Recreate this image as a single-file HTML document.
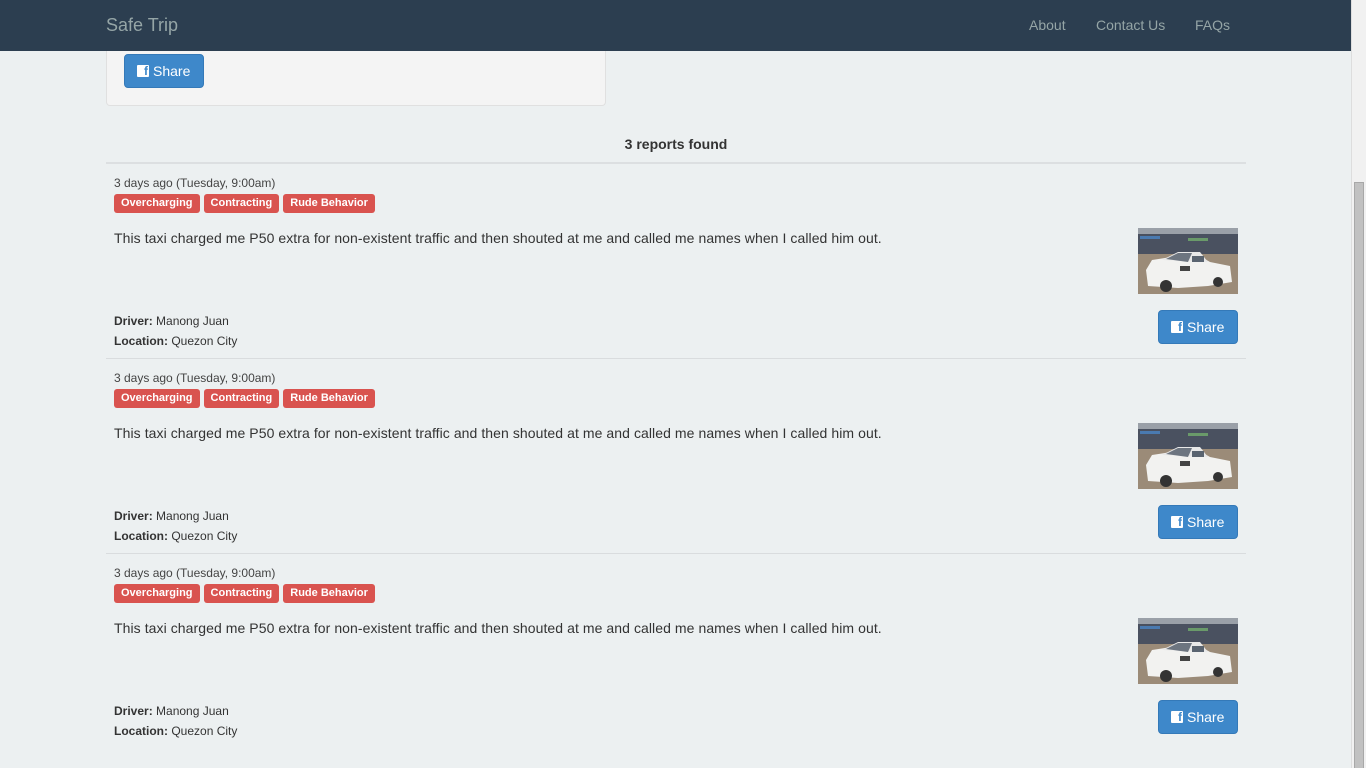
<!DOCTYPE html>
<html><head><meta charset="utf-8"><style>
*{box-sizing:border-box;margin:0;padding:0}
body{width:1366px;height:768px;overflow:hidden;background:#ecf0f1;font-family:"Liberation Sans",Arial,sans-serif;color:#2c3e50;position:relative}
.nav{position:absolute;left:0;top:0;width:1351px;height:51px;background:#2c3e50;z-index:5}
.brand{position:absolute;left:106px;top:15px;font-size:18px;color:#95a5a6}
.nl{position:absolute;top:17px;font-size:14px;color:#95a5a6}
.sb{position:absolute;left:1351px;top:0;width:15px;height:768px;background:#f1f1f1;border-left:1px solid #ddd}
.thumb{position:absolute;left:1354px;top:182px;width:10px;height:586px;background:#c1c1c1;border:1px solid #a8a8a8;border-bottom:none}
.panel{position:absolute;left:106px;top:30px;width:500px;height:76px;background:#f4f4f4;border:1px solid #e0e0e0;border-top:none;border-radius:0 0 4px 4px}
.btn{position:absolute;width:80px;height:34px;background:#3e88ca;border:1px solid #3479b8;border-radius:4px;color:#fff;font-size:14px;line-height:32px;text-align:left;padding-left:12px}
.fb{display:inline-block;width:12px;height:12px;background:#fff;border-radius:1px;position:relative;vertical-align:-1px;margin-right:4px}
.fb:after{content:"f";position:absolute;right:1px;top:-1px;font-size:12px;font-weight:bold;color:#3e88ca;line-height:14px}
.found{position:absolute;left:106px;width:1140px;top:136px;text-align:center;font-weight:bold;font-size:14px;color:#333}
.hr{position:absolute;left:106px;width:1140px;height:2px;background:#dcdfe1}
.hr1{height:1px;background:#d9dcde}
.rep{position:absolute;left:106px;width:1140px;height:195px}
.date{position:absolute;left:8px;top:0;font-size:12px;color:#444}
.tags{position:absolute;left:8px;top:18px;font-size:0}
.tag{display:inline-block;background:#d9534f;color:#fff;font-weight:bold;font-size:11px;height:19px;line-height:19px;padding:0 7px;border-radius:3px;margin-right:4px}
.txt{position:absolute;left:8px;top:54px;font-size:14px;color:#333;letter-spacing:0.07px}
.img{position:absolute;left:1032px;top:52px;width:100px;height:66px}
.drv{position:absolute;left:8px;font-size:12px;color:#333}
</style></head><body>
<div class="nav"><div class="brand">Safe Trip</div>
<div class="nl" style="left:1029px">About</div><div class="nl" style="left:1096px">Contact Us</div><div class="nl" style="left:1195px">FAQs</div></div>
<div class="sb"></div><div class="thumb"></div>
<div class="panel"></div>
<div class="btn" style="left:124px;top:54px"><span class="fb"></span>Share</div>
<div class="found">3 reports found</div>
<div class="hr" style="top:162px"></div>

<div class="rep" style="top:176px">
<div class="date">3 days ago (Tuesday, 9:00am)</div>
<div class="tags"><span class="tag">Overcharging</span><span class="tag">Contracting</span><span class="tag">Rude Behavior</span></div>
<div class="txt">This taxi charged me P50 extra for non-existent traffic and then shouted at me and called me names when I called him out.</div>
<svg class="img" viewBox="0 0 100 66"><rect width="100" height="66" fill="#8d8070"/><rect width="100" height="26" fill="#4a5160"/><rect x="0" y="0" width="100" height="6" fill="#9aa0a8"/><rect x="2" y="8" width="20" height="3" fill="#4a7ab0"/><rect x="50" y="10" width="20" height="3" fill="#6a9a6a"/><rect x="0" y="26" width="100" height="40" fill="#9b8b78"/><path d="M8 42 L14 32 L40 28 L58 26 L72 34 L92 38 L94 54 L70 58 L40 60 L10 58 Z" fill="#f2f2f0"/><path d="M24 32 L40 24 L62 24 L70 34 Z" fill="#e8e8e8"/><path d="M28 31 L40 25 L54 25 L50 34 Z" fill="#6d7580"/><rect x="54" y="28" width="12" height="6" fill="#5a6470"/><circle cx="28" cy="58" r="6" fill="#333"/><circle cx="80" cy="54" r="5" fill="#333"/><rect x="42" y="38" width="10" height="5" fill="#444"/></svg>
<div class="drv" style="top:138px"><b>Driver:</b> Manong Juan</div>
<div class="drv" style="top:158px"><b>Location:</b> Quezon City</div>
<div class="btn" style="left:1052px;top:134px"><span class="fb"></span>Share</div>
</div>
<div class="hr hr1" style="top:358px"></div>

<div class="rep" style="top:371px">
<div class="date">3 days ago (Tuesday, 9:00am)</div>
<div class="tags"><span class="tag">Overcharging</span><span class="tag">Contracting</span><span class="tag">Rude Behavior</span></div>
<div class="txt">This taxi charged me P50 extra for non-existent traffic and then shouted at me and called me names when I called him out.</div>
<svg class="img" viewBox="0 0 100 66"><rect width="100" height="66" fill="#8d8070"/><rect width="100" height="26" fill="#4a5160"/><rect x="0" y="0" width="100" height="6" fill="#9aa0a8"/><rect x="2" y="8" width="20" height="3" fill="#4a7ab0"/><rect x="50" y="10" width="20" height="3" fill="#6a9a6a"/><rect x="0" y="26" width="100" height="40" fill="#9b8b78"/><path d="M8 42 L14 32 L40 28 L58 26 L72 34 L92 38 L94 54 L70 58 L40 60 L10 58 Z" fill="#f2f2f0"/><path d="M24 32 L40 24 L62 24 L70 34 Z" fill="#e8e8e8"/><path d="M28 31 L40 25 L54 25 L50 34 Z" fill="#6d7580"/><rect x="54" y="28" width="12" height="6" fill="#5a6470"/><circle cx="28" cy="58" r="6" fill="#333"/><circle cx="80" cy="54" r="5" fill="#333"/><rect x="42" y="38" width="10" height="5" fill="#444"/></svg>
<div class="drv" style="top:138px"><b>Driver:</b> Manong Juan</div>
<div class="drv" style="top:158px"><b>Location:</b> Quezon City</div>
<div class="btn" style="left:1052px;top:134px"><span class="fb"></span>Share</div>
</div>
<div class="hr hr1" style="top:553px"></div>

<div class="rep" style="top:566px">
<div class="date">3 days ago (Tuesday, 9:00am)</div>
<div class="tags"><span class="tag">Overcharging</span><span class="tag">Contracting</span><span class="tag">Rude Behavior</span></div>
<div class="txt">This taxi charged me P50 extra for non-existent traffic and then shouted at me and called me names when I called him out.</div>
<svg class="img" viewBox="0 0 100 66"><rect width="100" height="66" fill="#8d8070"/><rect width="100" height="26" fill="#4a5160"/><rect x="0" y="0" width="100" height="6" fill="#9aa0a8"/><rect x="2" y="8" width="20" height="3" fill="#4a7ab0"/><rect x="50" y="10" width="20" height="3" fill="#6a9a6a"/><rect x="0" y="26" width="100" height="40" fill="#9b8b78"/><path d="M8 42 L14 32 L40 28 L58 26 L72 34 L92 38 L94 54 L70 58 L40 60 L10 58 Z" fill="#f2f2f0"/><path d="M24 32 L40 24 L62 24 L70 34 Z" fill="#e8e8e8"/><path d="M28 31 L40 25 L54 25 L50 34 Z" fill="#6d7580"/><rect x="54" y="28" width="12" height="6" fill="#5a6470"/><circle cx="28" cy="58" r="6" fill="#333"/><circle cx="80" cy="54" r="5" fill="#333"/><rect x="42" y="38" width="10" height="5" fill="#444"/></svg>
<div class="drv" style="top:138px"><b>Driver:</b> Manong Juan</div>
<div class="drv" style="top:158px"><b>Location:</b> Quezon City</div>
<div class="btn" style="left:1052px;top:134px"><span class="fb"></span>Share</div>
</div>
</body></html>
